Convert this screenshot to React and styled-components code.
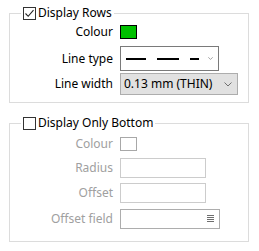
import React from "react";
import styled, { createGlobalStyle } from "styled-components";

const GlobalStyle = createGlobalStyle`
  html, body { margin: 0; padding: 0; background: #ffffff; }
  body { font-family: "Noto Sans", "Open Sans", sans-serif; font-size: 12px; color: #000; }
`;

const Page = styled.div`
  width: 240px;
  padding: 5px 10px 0 9px;
  display: flex;
  flex-direction: column;
  gap: 12px;
`;

const Group = styled.fieldset`
  margin: 0;
  padding: 0;
  min-width: 0;
  border: 1px solid #dcdcdc;
`;

const Legend = styled.legend`
  margin-left: 11px;
  padding: 0 2px;
  display: flex;
  align-items: center;
  gap: 2px;
  height: 16px;
  line-height: 16px;
  color: #000;
`;

const CheckBox = styled.span`
  width: 13px;
  height: 13px;
  box-sizing: border-box;
  border: 1px solid #333333;
  background: #fff;
  display: inline-flex;
  align-items: center;
  justify-content: center;
`;

const Form = styled.div`
  display: grid;
  grid-template-columns: 94px auto;
  column-gap: 7px;
  align-items: center;
  padding: ${(p) => p.$top}px 0 ${(p) => p.$bottom}px 9px;
  row-gap: 0;
`;

const Label = styled.div`
  text-align: right;
  white-space: nowrap;
  line-height: 16px;
  color: ${(p) => (p.$disabled ? "#a0a0a0" : "#000")};
  margin-top: ${(p) => p.$mt || 0}px;
`;

const Cell = styled.div`
  display: flex;
  align-items: center;
  margin-top: ${(p) => p.$mt || 0}px;
  height: ${(p) => p.$h}px;
`;

const Swatch = styled.div`
  width: 17px;
  height: 14px;
  box-sizing: border-box;
  border: 1px solid ${(p) => p.$border};
  background: ${(p) => p.$fill};
`;

const Combo = styled.div`
  box-sizing: border-box;
  width: ${(p) => p.$w}px;
  height: ${(p) => p.$h}px;
  border: 1px solid ${(p) => p.$border};
  background: ${(p) => p.$bg};
  display: flex;
  align-items: center;
  padding: 0 5px 0 3px;
  gap: 4px;
`;

const ComboText = styled.span`
  flex: 1;
  white-space: nowrap;
  line-height: 16px;
`;

const TextBox = styled.div`
  box-sizing: border-box;
  width: ${(p) => p.$w}px;
  height: 20px;
  border: 1px solid ${(p) => p.$border};
  background: #fff;
  display: flex;
  align-items: center;
  justify-content: flex-end;
  padding-right: 5px;
`;

const Check = () => (
  <svg width="11" height="11" viewBox="0 0 11 11">
    <path d="M1.5 5.5 L4.2 8.3 L9.5 2.2" fill="none" stroke="#222" strokeWidth="1.1" />
  </svg>
);

const Chevron = () => (
  <svg width="8" height="5" viewBox="0 0 8 5">
    <path d="M0.5 0.5 L4 4 L7.5 0.5" fill="none" stroke="#707070" strokeWidth="1" />
  </svg>
);

const Dashes = () => (
  <svg width="76" height="4" viewBox="0 0 76 4" style={{ flex: "none" }}>
    <g stroke="#000" strokeWidth="2">
      <line x1="2" y1="2" x2="22" y2="2" />
      <line x1="33" y1="2" x2="55" y2="2" />
      <line x1="66" y1="2" x2="75" y2="2" />
    </g>
  </svg>
);

const Hamburger = () => (
  <svg width="7" height="8" viewBox="0 0 7 8">
    <g stroke="#6e6e6e" strokeWidth="1">
      <line x1="0" y1="0.5" x2="7" y2="0.5" />
      <line x1="0" y1="2.5" x2="7" y2="2.5" />
      <line x1="0" y1="4.5" x2="7" y2="4.5" />
      <line x1="0" y1="6.5" x2="7" y2="6.5" />
    </g>
  </svg>
);

const DashSpacer = styled.span`
  flex: 1;
`;

export default function App() {
  return (
    <>
      <GlobalStyle />
      <Page>
        <Group>
          <Legend>
            <CheckBox>
              <Check />
            </CheckBox>
            Display Rows
          </Legend>
          <Form $top={3} $bottom={7}>
            <Label>Colour</Label>
            <Cell $h={14}>
              <Swatch $fill="#00c000" $border="#000" />
            </Cell>
            <Label $mt={6}>Line type</Label>
            <Cell $h={25} $mt={6}>
              <Combo $w={99} $h={25} $border="#7a7a7a" $bg="#fff">
                <Dashes />
                <DashSpacer />
                <Chevron />
              </Combo>
            </Cell>
            <Label $mt={2}>Line width</Label>
            <Cell $h={22} $mt={2}>
              <Combo $w={118} $h={22} $border="#adadad" $bg="#e1e1e1">
                <ComboText>0.13 mm (THIN)</ComboText>
                <Chevron />
              </Combo>
            </Cell>
          </Form>
        </Group>
        <Group>
          <Legend>
            <CheckBox />
            Display Only Bottom
          </Legend>
          <Form $top={5} $bottom={12}>
            <Label $disabled>Colour</Label>
            <Cell $h={14}>
              <Swatch $fill="#fff" $border="#a8a8a8" />
            </Cell>
            <Label $disabled $mt={6}>Radius</Label>
            <Cell $h={20} $mt={6}>
              <TextBox $w={86} $border="#cccccc" />
            </Cell>
            <Label $disabled $mt={5}>Offset</Label>
            <Cell $h={20} $mt={5}>
              <TextBox $w={86} $border="#cccccc" />
            </Cell>
            <Label $disabled $mt={6}>Offset field</Label>
            <Cell $h={20} $mt={6}>
              <TextBox $w={100} $border="#adadad">
                <Hamburger />
              </TextBox>
            </Cell>
          </Form>
        </Group>
      </Page>
    </>
  );
}
